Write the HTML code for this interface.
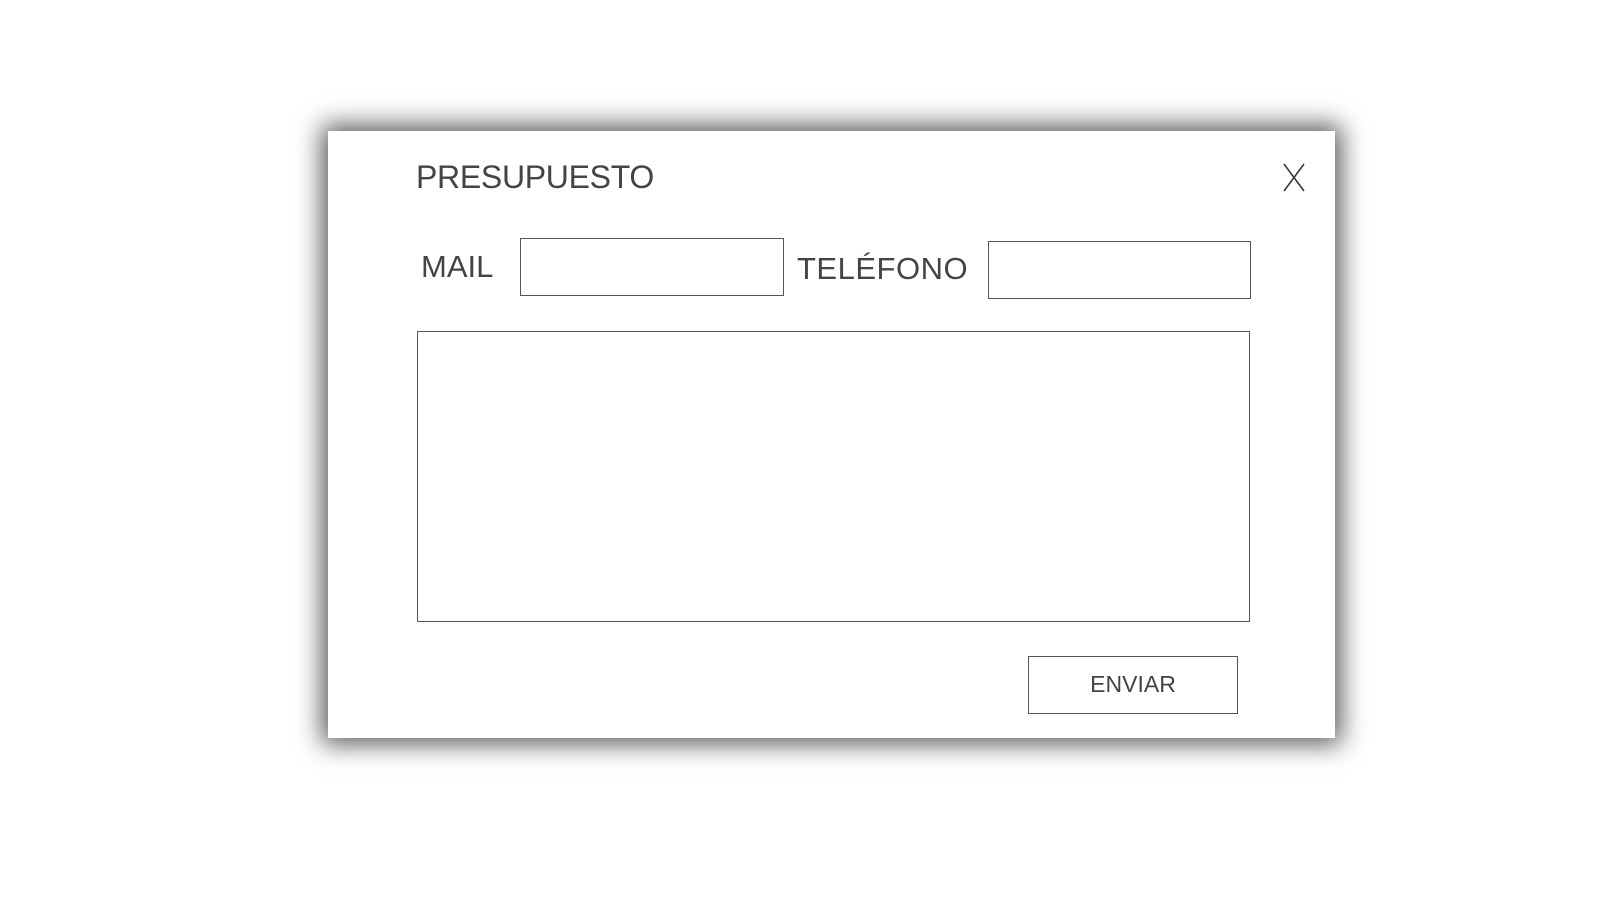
<!DOCTYPE html>
<html><head><meta charset="utf-8"><style>
html,body{margin:0;padding:0;background:#fff;width:1600px;height:900px;overflow:hidden;font-family:"Liberation Sans",sans-serif;color:#333}
.modal{position:absolute;left:328px;top:131px;width:1007px;height:607px;background:#fff;box-shadow:0 0 24px 6px rgba(0,0,0,.65)}
.t{position:absolute;white-space:nowrap;color:#444;line-height:1.15}
.box{position:absolute;border:1px solid #555;box-sizing:border-box}
</style></head><body>
<div class="modal"></div>
<div class="t" style="left:416px;top:159px;font-size:32px;letter-spacing:-0.3px">PRESUPUESTO</div>
<svg style="position:absolute;left:1283px;top:163px" width="22" height="29"><path d="M1 1 L21 28 M21 1 L1 28" stroke="#333" stroke-width="1.5" fill="none"/></svg>
<div class="t" style="left:421px;top:249px;font-size:31px">MAIL</div>
<div class="box" style="left:520px;top:238px;width:264px;height:58px"></div>
<div class="t" style="left:797px;top:251px;font-size:31px;letter-spacing:0.5px">TELÉFONO</div>
<div class="box" style="left:988px;top:241px;width:263px;height:58px"></div>
<div class="box" style="left:417px;top:331px;width:833px;height:291px"></div>
<div class="box" style="left:1028px;top:656px;width:210px;height:58px"></div>
<div class="t" style="left:1028px;width:210px;text-align:center;top:671px;font-size:23px">ENVIAR</div>
</body></html>
